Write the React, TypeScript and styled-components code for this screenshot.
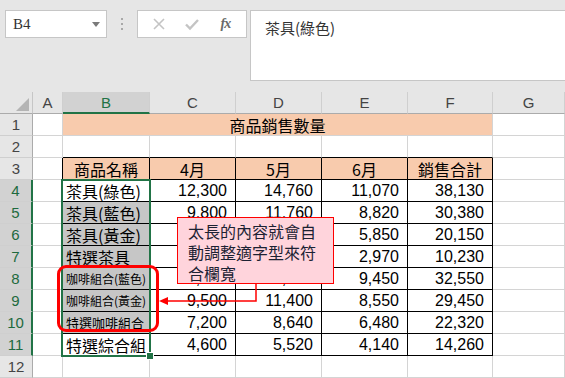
import React from 'react';
import styled, { createGlobalStyle } from 'styled-components';

const GRID = '#d4d4d4';
const INK = '#000';
const PEACH = '#f8cbad';
const SEL = '#c6c6c6';
const GREEN = '#217346';
const HEAD = '#e6e6e6';

const GlobalStyle = createGlobalStyle`
  html, body {
    margin: 0;
    padding: 0;
    background: ${HEAD};
    overflow: hidden;
  }
  body {
    font-family: "Noto Sans CJK TC", "Liberation Sans", sans-serif;
  }
`;

const Window = styled.div`
  width: 565px;
  height: 378px;
  overflow: hidden;
  background: ${HEAD};
  display: flex;
  flex-direction: column;
`;

const FormulaBar = styled.div`
  box-sizing: border-box;
  height: 92px;
  padding: 10px 0 0 5px;
  display: flex;
  align-items: flex-start;
`;

const NameBox = styled.div`
  box-sizing: border-box;
  width: 102px;
  height: 28px;
  background: #fff;
  border: 1px solid #c6c6c6;
  display: flex;
  align-items: center;
  justify-content: space-between;
  padding: 0 6px 0 7px;
  font-family: "Liberation Serif", serif;
  font-size: 15px;
  color: #333;
`;

const DropArrow = styled.span`
  width: 0;
  height: 0;
  border-left: 4px solid transparent;
  border-right: 4px solid transparent;
  border-top: 5px solid #7a7a7a;
`;

const Grip = styled.div`
  width: 30px;
  height: 28px;
  display: flex;
  flex-direction: column;
  align-items: center;
  justify-content: center;
  gap: 3px;
  & > span {
    width: 2px;
    height: 2px;
    background: #a8a8a8;
  }
`;

const ButtonGroup = styled.div`
  box-sizing: border-box;
  width: 110px;
  height: 28px;
  background: #fff;
  border: 1px solid #c6c6c6;
  display: flex;
  align-items: center;
  justify-content: space-around;
  padding: 0 4px;
`;

const IconButton = styled.span`
  width: 30px;
  display: flex;
  align-items: center;
  justify-content: center;
`;

const Fx = styled.span`
  font-family: "Liberation Serif", serif;
  font-style: italic;
  font-weight: bold;
  font-size: 14px;
  color: #6a6a6a;
  letter-spacing: -1px;
`;

const FormulaInput = styled.div`
  box-sizing: border-box;
  flex: 1;
  height: 71px;
  margin-left: 3px;
  background: #fff;
  border: 1px solid #c6c6c6;
  border-right: none;
  padding: 4px 0 0 14px;
  font-size: 15px;
  line-height: 26px;
  color: #333;
`;

const Sheet = styled.div`
  position: relative;
  display: grid;
  grid-template-columns: 33px 30px 87px 86px 86px 86px 85px 72px;
  grid-auto-rows: 22px;
`;

const Corner = styled.div`
  position: relative;
  box-sizing: border-box;
  background: ${HEAD};
  border-right: 1px solid #c6c6c6;
  border-bottom: 1px solid #ababab;
  &::after {
    content: '';
    position: absolute;
    right: 3px;
    bottom: 2px;
    width: 0;
    height: 0;
    border-left: 13px solid transparent;
    border-bottom: 13px solid #b4b4b4;
  }
`;

const ColHead = styled.div<{ $active?: boolean }>`
  box-sizing: border-box;
  background: ${p => (p.$active ? '#d2d2d2' : HEAD)};
  border-right: 1px solid #cfcfcf;
  border-bottom: ${p => (p.$active ? `2px solid ${GREEN}` : '1px solid #ababab')};
  display: flex;
  align-items: center;
  justify-content: center;
  font-family: "Liberation Sans", Arial, sans-serif;
  font-size: 15px;
  color: ${p => (p.$active ? GREEN : '#444')};
`;

const RowHead = styled.div<{ $active?: boolean }>`
  box-sizing: border-box;
  background: ${p => (p.$active ? '#d2d2d2' : HEAD)};
  border-right: ${p => (p.$active ? `2px solid ${GREEN}` : '1px solid #ababab')};
  border-bottom: 1px solid #cfcfcf;
  display: flex;
  align-items: center;
  justify-content: center;
  font-family: "Liberation Sans", Arial, sans-serif;
  font-size: 15px;
  color: ${p => (p.$active ? '#1e6a3e' : '#444')};
`;

type CellProps = {
  $bg?: string;
  $align?: 'left' | 'center' | 'right';
  $size?: number;
  $right?: string;
  $bottom?: string;
  $span?: number;
  $num?: boolean;
};

const Cell = styled.div<CellProps>`
  box-sizing: border-box;
  grid-column: ${p => (p.$span ? `span ${p.$span}` : 'auto')};
  background: ${p => p.$bg || '#fff'};
  border-right: 1px solid ${p => p.$right || GRID};
  border-bottom: 1px solid ${p => p.$bottom || GRID};
  display: flex;
  align-items: center;
  justify-content: ${p =>
    p.$align === 'right' ? 'flex-end' : p.$align === 'center' ? 'center' : 'flex-start'};
  padding: ${p =>
    p.$align === 'right' ? '0 8px 0 0' : p.$align === 'center' ? '0' : '0 0 0 3px'};
  font-family: ${p =>
    p.$num ? '"Liberation Sans", Arial, sans-serif' : '"Noto Sans CJK TC", sans-serif'};
  font-size: ${p => p.$size || 16}px;
  line-height: 1;
  white-space: nowrap;
  overflow: hidden;
  color: #000;
`;

const Selection = styled.div`
  position: absolute;
  left: 61px;
  top: 87px;
  width: 90px;
  height: 178px;
  box-sizing: border-box;
  border: 2px solid ${GREEN};
  pointer-events: none;
`;

const FillHandle = styled.span`
  position: absolute;
  right: -5px;
  bottom: -5px;
  width: 6px;
  height: 6px;
  background: ${GREEN};
  border: 1px solid #fff;
`;

const Highlight = styled.div`
  position: absolute;
  left: 57px;
  top: 173px;
  width: 102px;
  height: 67px;
  box-sizing: border-box;
  border: 3px solid #ff0000;
  border-radius: 9px;
`;

const Callout = styled.div`
  position: absolute;
  left: 177px;
  top: 125px;
  width: 157px;
  height: 67px;
  box-sizing: border-box;
  background: #ffd4dc;
  border: 1px solid #ff0000;
  padding: 3px 0 0 10px;
  font-size: 16px;
  line-height: 21px;
  color: #1c2233;
`;

const Arrow = styled.svg`
  position: absolute;
  left: 150px;
  top: 190px;
  overflow: visible;
`;

type Row = { name: string; size?: number; sel?: boolean; values: string[] };

const rows: Row[] = [
  { name: '茶具(綠色)', values: ['12,300', '14,760', '11,070', '38,130'] },
  { name: '茶具(藍色)', sel: true, values: ['9,800', '11,760', '8,820', '30,380'] },
  { name: '茶具(黃金)', sel: true, values: ['6,500', '7,800', '5,850', '20,150'] },
  { name: '特選茶具', sel: true, values: ['3,300', '3,960', '2,970', '10,230'] },
  { name: '咖啡組合(藍色)', size: 12, sel: true, values: ['10,500', '12,600', '9,450', '32,550'] },
  { name: '咖啡組合(黃金)', size: 12, sel: true, values: ['9,500', '11,400', '8,550', '29,450'] },
  { name: '特選咖啡組合', size: 13, sel: true, values: ['7,200', '8,640', '6,480', '22,320'] },
  { name: '特選綜合組', values: ['4,600', '5,520', '4,140', '14,260'] },
];

const headers = ['商品名稱', '4月', '5月', '6月', '銷售合計'];
const columns = ['A', 'B', 'C', 'D', 'E', 'F', 'G'];

export default function App() {
  return (
    <Window>
      <GlobalStyle />
      <FormulaBar>
        <NameBox>
          B4
          <DropArrow />
        </NameBox>
        <Grip>
          <span />
          <span />
          <span />
        </Grip>
        <ButtonGroup>
          <IconButton>
            <svg width="14" height="14" viewBox="0 0 14 14">
              <path d="M2 2 L12 12 M12 2 L2 12" stroke="#c4c4c4" strokeWidth="1.6" />
            </svg>
          </IconButton>
          <IconButton>
            <svg width="16" height="14" viewBox="0 0 16 14">
              <path d="M2 7.5 L6 11.5 L14 3" stroke="#c4c4c4" strokeWidth="2.4" fill="none" />
            </svg>
          </IconButton>
          <IconButton>
            <Fx>fx</Fx>
          </IconButton>
        </ButtonGroup>
        <FormulaInput>茶具(綠色)</FormulaInput>
      </FormulaBar>

      <Sheet>
        <Corner />
        {columns.map(c => (
          <ColHead key={c} $active={c === 'B'}>
            {c}
          </ColHead>
        ))}

        <RowHead>1</RowHead>
        <Cell />
        <Cell $span={5} $bg={PEACH} $align="center" $right={GRID} $bottom={GRID}>
          商品銷售數量
        </Cell>
        <Cell />

        <RowHead>2</RowHead>
        <Cell />
        {headers.map(h => (
          <Cell key={h} $bottom={INK} />
        ))}
        <Cell />

        <RowHead>3</RowHead>
        <Cell $right={INK} />
        {headers.map(h => (
          <Cell key={h} $bg={PEACH} $align="center" $right={INK} $bottom={INK}>
            {h}
          </Cell>
        ))}
        <Cell />

        {rows.map((r, i) => (
          <React.Fragment key={r.name}>
            <RowHead $active>{i + 4}</RowHead>
            <Cell $right={INK} />
            <Cell $bg={r.sel ? SEL : '#fff'} $size={r.size} $right={INK} $bottom={INK}>
              {r.name}
            </Cell>
            {r.values.map((v, j) => (
              <Cell key={j} $num $align="right" $right={INK} $bottom={INK}>
                {v}
              </Cell>
            ))}
            <Cell />
          </React.Fragment>
        ))}

        <RowHead>12</RowHead>
        {columns.map(c => (
          <Cell key={c} />
        ))}

        <Selection>
          <FillHandle />
        </Selection>
        <Highlight />
        <Callout>
          太長的內容就會自
          <br />
          動調整適字型來符
          <br />
          合欄寬
        </Callout>
        <Arrow width="110" height="26" viewBox="0 0 110 26">
          <path d="M106 2 L106 19 L16 19" stroke="#ff0000" strokeWidth="1.5" fill="none" />
          <polygon points="9,19 18,15 18,23" fill="#ff0000" />
        </Arrow>
      </Sheet>
    </Window>
  );
}
